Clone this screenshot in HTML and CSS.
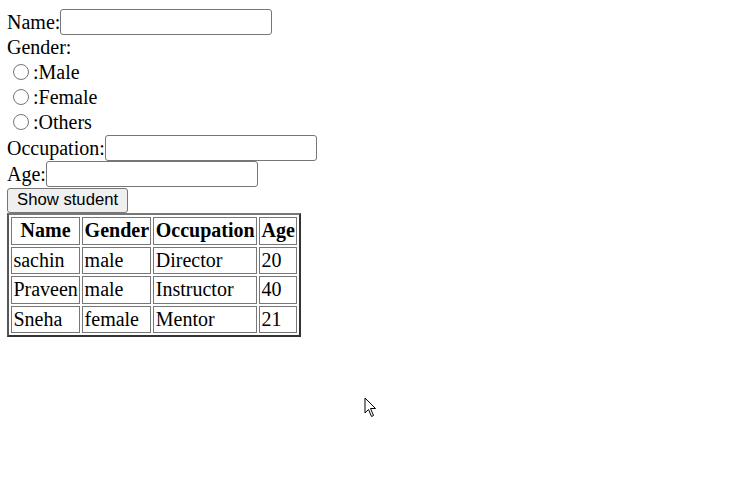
FILE: index.html
```html
<!doctype html>
<html lang="en">
  <head>
    <meta charset="UTF-8" />
    <meta name="viewport" content="width=device-width, initial-scale=1.0" />
    <title>Student</title>
    <link rel="stylesheet" href="styles.css">
  </head>
  <body>
    <form class="student-form">
      <div class="row field">
        <label for="name">Name:</label><input type="text" id="name">
      </div>
      <div class="row gender-label">Gender:</div>
      <div class="row choice">
        <input type="radio" name="gender" id="male"><label for="male">:Male</label>
      </div>
      <div class="row choice">
        <input type="radio" name="gender" id="female"><label for="female">:Female</label>
      </div>
      <div class="row choice">
        <input type="radio" name="gender" id="others"><label for="others">:Others</label>
      </div>
      <div class="row field">
        <label for="occupation">Occupation:</label><input type="text" id="occupation">
      </div>
      <div class="row field">
        <label for="age">Age:</label><input type="text" id="age">
      </div>
      <div class="actions">
        <button type="button">Show student</button>
      </div>
    </form>

    <table class="students">
      <tr>
        <th>Name</th>
        <th>Gender</th>
        <th>Occupation</th>
        <th>Age</th>
      </tr>
      <tr>
        <td>sachin</td>
        <td>male</td>
        <td>Director</td>
        <td>20</td>
      </tr>
      <tr>
        <td>Praveen</td>
        <td>male</td>
        <td>Instructor</td>
        <td>40</td>
      </tr>
      <tr>
        <td>Sneha</td>
        <td>female</td>
        <td>Mentor</td>
        <td>21</td>
      </tr>
    </table>

    <!-- mouse pointer captured in the screenshot -->
    <svg class="pointer" width="13" height="21" viewBox="0 0 13 21">
      <path d="M1 1 L1 16 L4.5 12.5 L7.5 19.5 L9.5 18.5 L6.5 11.5 L11.5 11.5 Z" fill="#fff" stroke="#000" stroke-width="1" stroke-linejoin="miter" />
    </svg>
  </body>
</html>
```

FILE: styles.css
```css
body {
  margin: 0;
  padding: 9px 7px;
  font-family: "Liberation Serif", "Times New Roman", serif;
  font-size: 20px;
  line-height: 23px;
  color: #000;
  background: #fff;
}

.row {
  display: flex;
  align-items: center;
}

.field {
  height: 26px;
}

.field input {
  box-sizing: border-box;
  width: 212px;
  height: 26px;
  margin: 0;
  padding: 1px 3px;
  border: 1px solid #767676;
  border-radius: 3px;
  font-family: "Liberation Sans", Arial, sans-serif;
  font-size: 16.7px;
  background: #fff;
}

.gender-label {
  height: 25px;
  line-height: 25px;
}

.choice {
  height: 25px;
  line-height: 25px;
  padding-left: 6px;
  gap: 4px;
}

.choice input {
  appearance: none;
  box-sizing: border-box;
  width: 16px;
  height: 16px;
  margin: 0 0 2px;
  border: 1px solid #767676;
  border-radius: 50%;
  background: #fff;
}

.actions {
  height: 26px;
}

.actions button {
  box-sizing: border-box;
  height: 25px;
  margin: 0;
  padding: 0 9px;
  border: 1px solid #767676;
  border-radius: 3px;
  background: #efefef;
  font-family: "Liberation Sans", Arial, sans-serif;
  font-size: 16.7px;
  color: #000;
}

.students {
  border-collapse: separate;
  border-spacing: 2px;
  border: 2px solid;
  border-color: #777 #333 #333 #555;
}

.students th,
.students td {
  padding: 1px 1.4px;
  border: 1px solid #777;
  line-height: 23.5px;
}

.students th {
  font-weight: bold;
  text-align: center;
}

.students td {
  text-align: left;
}

.pointer {
  position: absolute;
  left: 364px;
  top: 397px;
}
```
